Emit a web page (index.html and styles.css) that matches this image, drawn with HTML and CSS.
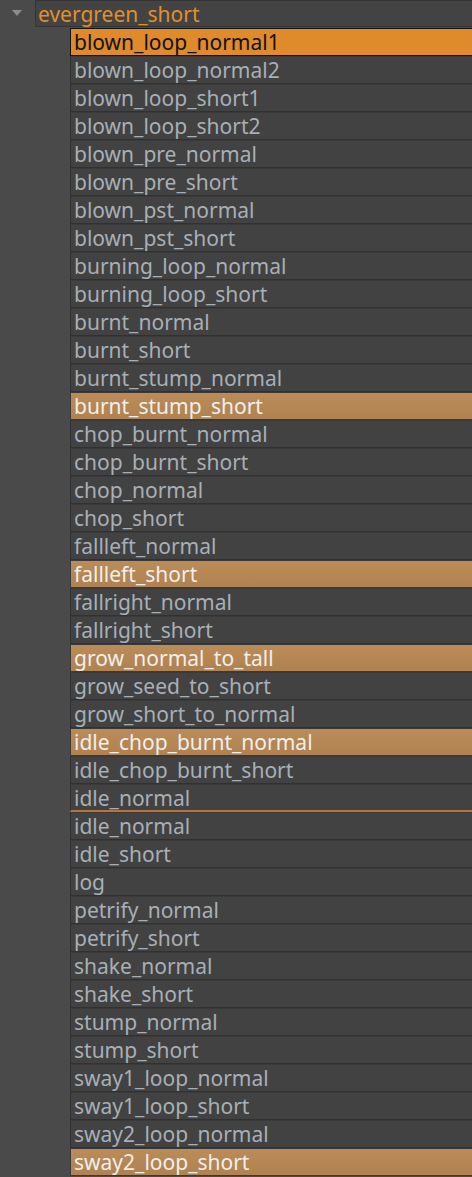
FILE: index.html
```html
<!DOCTYPE html>
<html>
<head>
<meta charset="utf-8">
<link rel="stylesheet" href="styles.css">
</head>
<body>
<div class="tree">
  <div class="group">
    <span class="caret"><svg width="10" height="6" viewBox="0 0 10 6"><path d="M0 0H10L5 6Z" fill="#8c8c8c"/></svg></span>
    <div class="group-label">evergreen_short</div>
  </div>
  <ul class="items">
    <li class="item active">blown_loop_normal1</li>
    <li class="item">blown_loop_normal2</li>
    <li class="item">blown_loop_short1</li>
    <li class="item">blown_loop_short2</li>
    <li class="item">blown_pre_normal</li>
    <li class="item">blown_pre_short</li>
    <li class="item">blown_pst_normal</li>
    <li class="item">blown_pst_short</li>
    <li class="item">burning_loop_normal</li>
    <li class="item">burning_loop_short</li>
    <li class="item">burnt_normal</li>
    <li class="item">burnt_short</li>
    <li class="item">burnt_stump_normal</li>
    <li class="item sel">burnt_stump_short</li>
    <li class="item">chop_burnt_normal</li>
    <li class="item">chop_burnt_short</li>
    <li class="item">chop_normal</li>
    <li class="item">chop_short</li>
    <li class="item">fallleft_normal</li>
    <li class="item sel">fallleft_short</li>
    <li class="item">fallright_normal</li>
    <li class="item">fallright_short</li>
    <li class="item sel">grow_normal_to_tall</li>
    <li class="item">grow_seed_to_short</li>
    <li class="item">grow_short_to_normal</li>
    <li class="item sel">idle_chop_burnt_normal</li>
    <li class="item">idle_chop_burnt_short</li>
    <li class="item drop">idle_normal</li>
    <li class="item">idle_normal</li>
    <li class="item">idle_short</li>
    <li class="item">log</li>
    <li class="item">petrify_normal</li>
    <li class="item">petrify_short</li>
    <li class="item">shake_normal</li>
    <li class="item">shake_short</li>
    <li class="item">stump_normal</li>
    <li class="item">stump_short</li>
    <li class="item">sway1_loop_normal</li>
    <li class="item">sway1_loop_short</li>
    <li class="item">sway2_loop_normal</li>
    <li class="item sel">sway2_loop_short</li>
  </ul>
</div>
</body>
</html>
```
FILE: styles.css
```css
html, body {
  margin: 0;
  padding: 0;
  background: #4a4a4a;
}
body {
  font-family: "Noto Sans", "Open Sans", sans-serif;
  font-size: 21px;
  overflow: hidden;
}
.tree {
  width: 472px;
}
.group {
  display: flex;
  align-items: stretch;
  height: 28px;
}
.caret {
  width: 35px;
  display: flex;
  align-items: flex-start;
  justify-content: center;
  padding-top: 10px;
  box-sizing: border-box;
}
.caret svg {
  margin-left: -2px;
}
.group-label {
  flex: 1;
  background: #434343;
  border: 1px solid #343434;
  border-right: none;
  border-radius: 2px 0 0 2px;
  color: #e0902e;
  padding-left: 2px;
  line-height: 26px;
  height: 27px;
  box-sizing: border-box;
}
.items {
  list-style: none;
  margin: 0;
  padding: 0 0 0 70px;
}
.item {
  height: 28px;
  box-sizing: border-box;
  background: #424242;
  border: 1px solid #313131;
  border-right: none;
  border-top-color: #3a3a3a;
  color: #a8afb6;
  padding-left: 3px;
  line-height: 26px;
  white-space: nowrap;
}
.item.active {
  background: #e08b2b;
  color: #111;
  border-color: #141414;
}
.item.sel {
  background: linear-gradient(#bb8c58, #b0824f);
  color: #efefef;
  border-color: #3a3a3a;
}
.item.drop {
  border-bottom: 2px solid #b8743a;
}
```
